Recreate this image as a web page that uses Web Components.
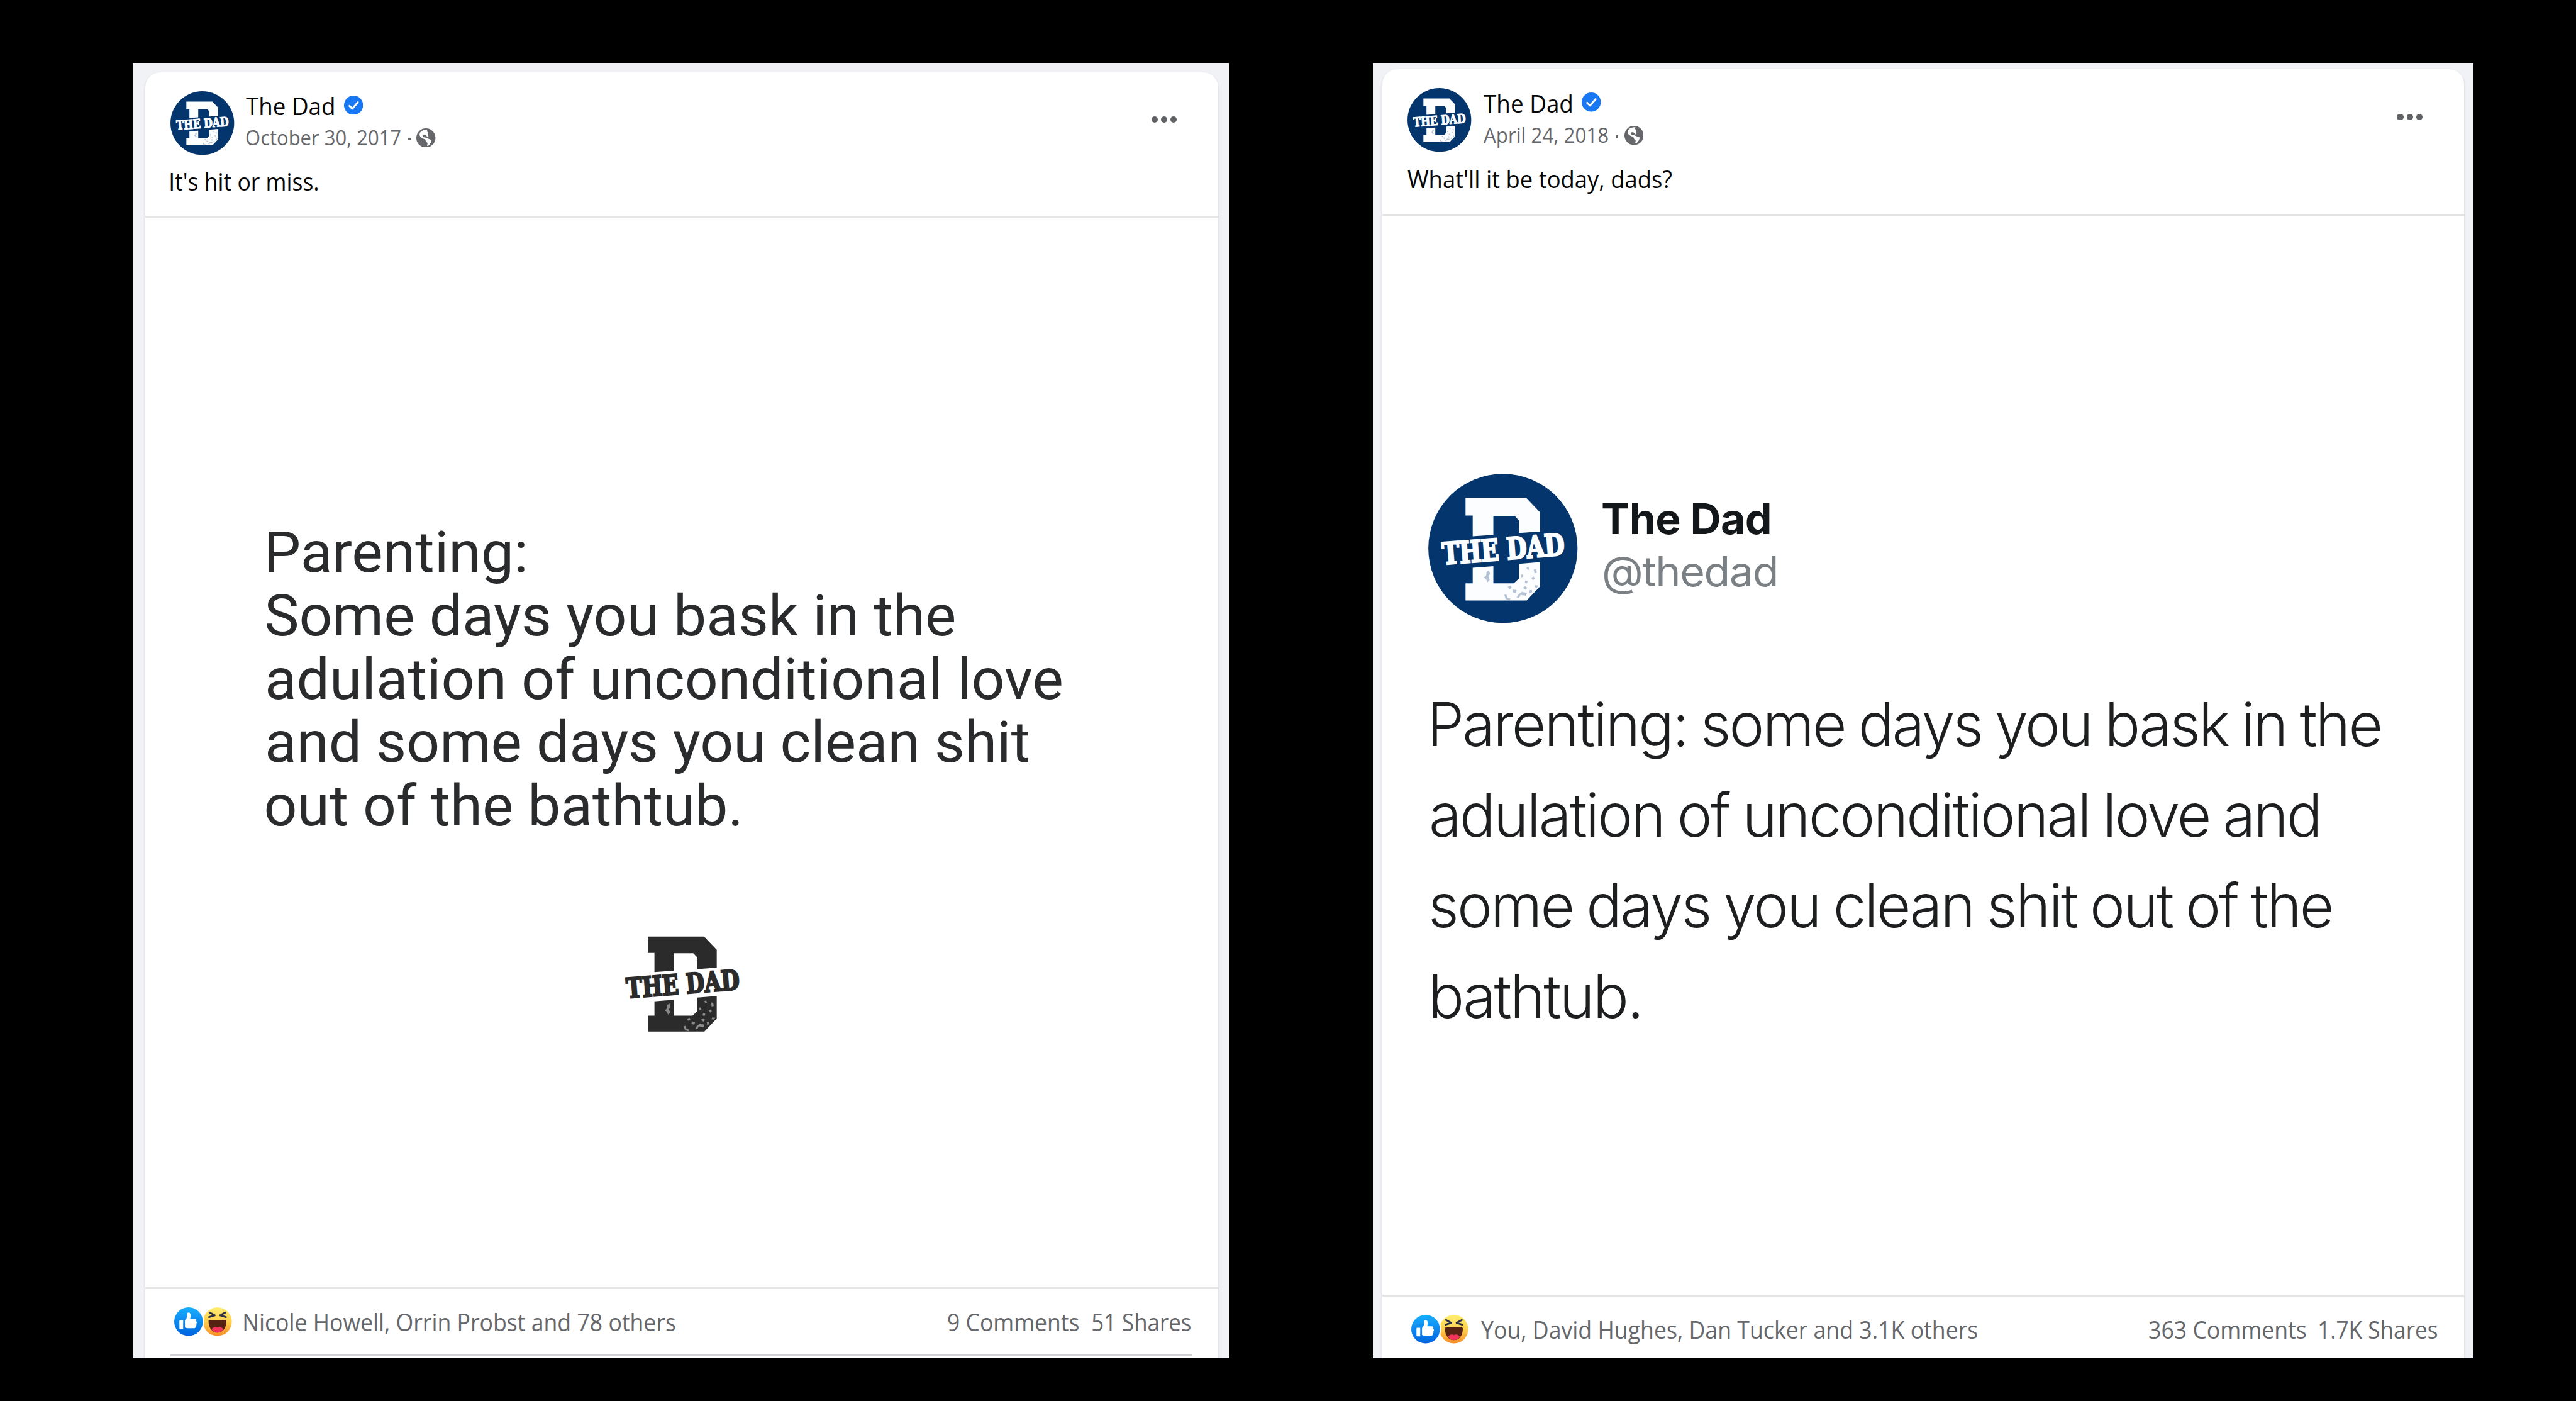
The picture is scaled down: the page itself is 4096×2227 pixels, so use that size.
<!DOCTYPE html>
<html lang="en">
<head>
<meta charset="utf-8">
<title>The Dad</title>
<style>
  html, body {
    margin: 0;
    background: #000;
  }
  body {
    width: 4096px;
    height: 2227px;
    overflow: hidden;
    font-family: "Open Sans", "Noto Sans", sans-serif;
    color: #050505;
  }
  main {
    display: flex;
    justify-content: space-between;
    padding: 100px 163px 0 211px;
  }
  .left {
    width: 1743px;
    --pad: 14.5px 17.3px 0 20px;
    --head: 228.7px;
    --media: 1702.9px;
    --top: 28.1px;
    --gap: 18px;
    --foot: 28.2px;
    --dots: 65.5px;
  }
  .right {
    width: 1750px;
    --pad: 9.9px 14.6px 0 14.7px;
    --head: 230.5px;
    --media: 1717.6px;
    --top: 28.5px;
    --gap: 19.8px;
    --foot: 28.6px;
    --dots: 66.3px;
  }
  .roboto {
    padding: 482px 0 0 194px;
    font: 400 91.7px/100.65px Roboto, sans-serif;
    color: #2a2b2d;
  }
  .roboto dad-logo {
    width: 235.4px;
    height: 191.3px;
    margin: 139.1px 0 0 545px;
    color: #2b2b2b;
  }
  .tweet {
    padding: 409.4px 0 0 73.3px;
    font-family: Inter, sans-serif;
    color: #1c1e20;
  }
  .author {
    display: flex;
    gap: 39.2px;
  }
  .author dad-logo {
    width: 237.5px;
    height: 237.5px;
  }
  .author div {
    padding-top: 31.6px;
    line-height: 82.2px;
  }
  .author .who {
    font-size: 67.5px;
    font-weight: 650;
    letter-spacing: -.01em;
    color: #14171a;
  }
  .author .handle {
    font-size: 66px;
    letter-spacing: -.02em;
    color: #7b8085;
  }
  .tweet .body {
    margin: 89px 0 0 5px;
    font-size: 95.6px;
    font-weight: 340;
    line-height: 144.05px;
    letter-spacing: -.03em;
    word-spacing: -.03em;
  }
</style>
</head>
<body>
<main>
  <post-card class="left" name="The Dad" name-width="139.6" date="October 30, 2017" date-width="245.8"
    reactions="Nicole Howell, Orrin Probst and 78 others" reactions-width="686.1"
    comments="9 Comments" comments-width="208.6" shares="51 Shares" shares-width="156.6" divider>
    <fit-line slot="message" width="234.9">It's hit or miss.</fit-line>
    <div class="roboto">
      <fit-line indent="1.6" width="407.9">Parenting:</fit-line>
      <fit-line indent="-1.7" width="1094.4">Some days you bask in the</fit-line>
      <fit-line width="1263.1">adulation of unconditional love</fit-line>
      <fit-line width="1210">and some days you clean shit</fit-line>
      <fit-line indent="-1.5" width="751.2">out of the bathtub.</fit-line>
      <dad-logo></dad-logo>
    </div>
  </post-card>
  <post-card class="right" name="The Dad" name-width="140" date="April 24, 2018" date-width="197.8"
    reactions="You, David Hughes, Dan Tucker and 3.1K others" reactions-width="789.5"
    comments="363 Comments" comments-width="249.9" shares="1.7K Shares" shares-width="187.7">
    <fit-line slot="message" width="420.8">What'll it be today, dads?</fit-line>
    <div class="tweet">
      <div class="author">
        <dad-logo round></dad-logo>
        <div>
          <fit-line class="who" width="266">The Dad</fit-line>
          <fit-line class="handle" indent="2" width="274">@thedad</fit-line>
        </div>
      </div>
      <div class="body">
        <fit-line indent="1.9" width="1506.8">Parenting: some days you bask in the</fit-line>
        <fit-line width="1409.3">adulation of unconditional love and</fit-line>
        <fit-line width="1431.2">some days you clean shit out of the</fit-line>
        <fit-line indent="1.9" width="328.2">bathtub.</fit-line>
      </div>
    </div>
  </post-card>
</main>

<script>
// One line of text, stretched so that its ink is exactly `width` wide
class FitLine extends HTMLElement {
  constructor() {
    super();
    this.attachShadow({ mode: 'open' });
    this.shadowRoot.innerHTML = `
      <style>
        :host { display: block; white-space: nowrap; }
        span { display: inline-block; transform-origin: 0 0; }
      </style>
      <span><slot></slot></span>
    `;
  }

  connectedCallback() {
    const width = Number(this.getAttribute('width'));
    const indent = Number(this.getAttribute('indent') || 0);
    const style = getComputedStyle(this);
    const spacing = parseFloat(style.letterSpacing) || 0;
    const wordSpacing = parseFloat(style.wordSpacing) || 0;
    const text = this.textContent;
    const ctx = document.createElement('canvas').getContext('2d');
    ctx.font = `${style.fontWeight} ${style.fontSize} ${style.fontFamily}`;
    const m = ctx.measureText(text);
    const ink = m.actualBoundingBoxLeft + m.actualBoundingBoxRight
      + spacing * (text.length - 1) + wordSpacing * (text.split(' ').length - 1);
    const scale = width / ink;
    const shift = m.actualBoundingBoxLeft * scale;
    this.style.width = `${width}px`;
    this.shadowRoot.querySelector('span').style.transform =
      `translateX(${shift + indent}px) scaleX(${scale})`;
  }
}

// The varsity D with the name across it, alone or on a round navy badge
class DadLogo extends HTMLElement {
  constructor() {
    super();
    this.attachShadow({ mode: 'open' });
  }

  connectedCallback() {
    const round = this.hasAttribute('round');
    this.shadowRoot.innerHTML = `
      <style>
        :host { display: block; flex: none; }
        svg { display: block; width: 100%; height: 100%; overflow: visible; }
        text { font: 700 condensed 180px "DejaVu Serif Condensed", "DejaVu Serif", serif; }
      </style>
      <svg viewBox="${round ? '21 -73 897 897' : '0 0 960 780'}">
        ${round ? '<circle cx="469.5" cy="375.5" r="448" fill="#04366d"/>' : ''}
        <g fill="${round ? '#fbfdff' : 'currentColor'}">
          <path d="M245 72H610L692 158V274L566 283V208L540 180H412V294L288 303V178H245Z"/>
          <path d="M288 492L412 482V585H535L566 556V468L692 458V604L612 688H245V585H288Z"/>
          <g transform="rotate(-4.5 112 474)" stroke="${round ? '#fbfdff' : 'currentColor'}" stroke-width="10">
            <text x="110" y="472" textLength="736" lengthAdjust="spacingAndGlyphs">THE DAD</text>
          </g>
        </g>
        <g fill="${round ? '#5f7ca0' : '#fff'}" opacity=".45">
          <path d="M372 515l14-8 6 22-10 14 8 22-14 14-8-20-14-8 14-12z"/>
          <path d="M610 492l12-6 8 12-10 8zM655 500l14 2 4 20-14 4zM575 535l12-4 6 14-12 4zM640 552l14-8 6 12-10 10zM604 568l14 4-4 14-14-2zM662 596l20 2-8 14-16-4z"/>
          <path d="M498 606l18-8 6 14-12 8zM530 622l22 4-6 18-18-6zM562 652l22-16 30 8-8 16-30-6-10 20-14-4zM478 654l12-4 6 22 18 4-4 10-24-6zM590 612l14-10 12 10-10 12zM628 628l14-4 4 14-16 8z"/>
        </g>
      </svg>
    `;
  }
}

class VerifiedBadge extends HTMLElement {
  constructor() {
    super();
    this.attachShadow({ mode: 'open' });
    this.shadowRoot.innerHTML = `
      <style>
        :host { display: block; width: 30.4px; height: 30.4px; }
        svg { display: block; }
      </style>
      <svg width="100%" height="100%" viewBox="0 0 12 12">
        <circle cx="6" cy="6" r="6" fill="#1877f2"/>
        <path d="M3.4 6.5L5.2 8.2L8.7 4.2" fill="none" stroke="#fff" stroke-width="1.2" stroke-linecap="round" stroke-linejoin="round"/>
      </svg>
    `;
  }
}

class GlobeIcon extends HTMLElement {
  constructor() {
    super();
    this.attachShadow({ mode: 'open' });
    this.shadowRoot.innerHTML = `
      <style>
        :host { display: block; width: 30.4px; height: 30.4px; }
        svg { display: block; }
      </style>
      <svg width="100%" height="100%" viewBox="0 0 16 16">
        <circle cx="8" cy="8" r="8" fill="#65676b"/>
        <path fill="#fff" d="M3 3.6C4.8 1.6 6.8 1 9.2 1.2L8.8 2.6L10 3.4L9.6 5L10.2 6.6L9 7.2L8.2 5.8L6.4 5.2L5 6.2L6 7.4L8 7.8L10.6 9L12.8 9.8L12.2 12L10.4 14.4L9 14.8L9.4 12.4L8 10.8L7.4 9.2L5.4 8.6L3.6 7.4L2.6 5.6Z"/>
      </svg>
    `;
  }
}

class ReactionIcons extends HTMLElement {
  constructor() {
    super();
    this.attachShadow({ mode: 'open' });
    this.shadowRoot.innerHTML = `
      <style>
        :host { display: flex; margin-top: -1.6px; }
        svg { display: block; width: 45.6px; height: 45.6px; overflow: visible; }
        .like { position: relative; }
      </style>
      <svg class="like" viewBox="0 0 16 16">
        <linearGradient id="b" x1="0" y1="0" x2="0" y2="1"><stop stop-color="#18afff"/><stop offset="1" stop-color="#0062df"/></linearGradient>
        <circle cx="8" cy="8" r="8.7" fill="#fff"/>
        <circle cx="8" cy="8" r="8" fill="url(#b)"/>
        <path fill="#fff" d="M3.3 7.2H5V12H3.3A.4.4 0 0 1 2.9 11.6V7.6A.4.4 0 0 1 3.3 7.2ZM6 7.3C6.9 6.5 7.2 5.6 7.2 4.2C7.2 3.2 7.5 2.9 8.1 2.9C9 3 9.3 4 9.2 4.9L8.9 6.4H11.5C12.3 6.4 12.6 7.1 12.2 7.7C12.8 8.2 12.8 8.8 12.3 9.1C12.6 9.7 12.4 10.2 11.9 10.5C12.1 11.3 11.7 11.7 10.9 11.7H8C7.2 11.7 6.6 11.5 6 11.2Z"/>
      </svg>
      <svg viewBox="0 0 16 16">
        <linearGradient id="y" x1="0" y1="0" x2="0" y2="1"><stop stop-color="#ffee72"/><stop offset=".5" stop-color="#ffd04e"/><stop offset="1" stop-color="#f78c26"/></linearGradient>
        <circle cx="8" cy="8" r="8" fill="url(#y)"/>
        <path d="M3.6 2.9L6.5 4.5L3.3 5.5M12.4 2.9L9.5 4.5L12.7 5.5" fill="none" stroke="#2b3048" stroke-width="1" stroke-linecap="round" stroke-linejoin="round"/>
        <path d="M3 7.6C3 7.2 3.3 7 3.8 7H12.2C12.7 7 13 7.2 13 7.6C13 11.4 11 14.1 8 14.1S3 11.4 3 7.6Z" fill="#562313"/>
        <path d="M4.7 12.3C5.4 10.9 7 10.6 8 11.3C9 10.6 10.6 10.9 11.3 12.3C10.5 13.5 9.4 14.1 8 14.1S5.5 13.5 4.7 12.3Z" fill="#f0345b"/>
      </svg>
    `;
  }
}

class PostCard extends HTMLElement {
  constructor() {
    super();
    this.attachShadow({ mode: 'open' });
  }

  line(name) {
    return `<fit-line class="${name}" width="${this.getAttribute(name + '-width')}">${this.getAttribute(name)}</fit-line>`;
  }

  connectedCallback() {
    this.shadowRoot.innerHTML = `
      <style>
        :host {
          display: flex;
          box-sizing: border-box;
          height: 2059px;
          padding: var(--pad);
          overflow: hidden;
          background: #f0f2f5;
        }
        article {
          flex: 1;
          background: #fff;
          border-radius: 24px 24px 0 0;
          box-shadow: 0 2.5px 4px rgba(0, 0, 0, .13);
        }
        header {
          box-sizing: border-box;
          height: var(--head);
          padding: var(--top) var(--dots) 0 40.4px;
          line-height: 50px;
          font-size: 37.5px;
        }
        .who {
          display: flex;
          height: 105px;
          margin-bottom: 16.5px;
        }
        .id { padding-top: 1.2px; }
        dad-logo {
          width: 101.4px;
          height: 101.4px;
          margin: 2px var(--gap) 0 0;
        }
        .row {
          display: flex;
          align-items: center;
        }
        .name { font-weight: 520; }
        verified-badge { margin: -4px 0 0 16.2px; }
        .meta {
          margin-top: 5.4px;
          height: 40px;
          line-height: 40px;
          font-size: 32px;
          color: #65676b;
        }
        .meta i {
          width: 4px;
          height: 4px;
          margin: 4px 9.6px 0 12px;
          border-radius: 1px;
          background: #65676b;
        }
        .more {
          display: flex;
          gap: 4.9px;
          margin: 42.5px 0 0 auto;
        }
        .more i {
          width: 10.3px;
          height: 10.3px;
          border-radius: 50%;
          background: #606266;
        }
        .media {
          box-sizing: border-box;
          height: var(--media);
          border-top: 3px solid #e5e5e6;
        }
        .media + footer { border-top: 3px solid #e5e5e6; }
        footer {
          padding: calc(var(--foot) - .5px) 42.8px 0 46px;
          font-size: 37.5px;
          line-height: 50px;
          color: #65676b;
        }
        .reactions { margin-left: 20px; }
        .comments { margin-left: auto; }
        .shares { margin-left: 21.4px; }
        hr {
          height: 3px;
          margin: 26.4px -2.1px 0 -5.8px;
          border: 0;
          background: #ced0d3;
        }
      </style>
      <article>
        <header>
          <div class="who">
            <dad-logo round></dad-logo>
            <div class="id">
              <div class="row">${this.line('name')}<verified-badge></verified-badge></div>
              <div class="row meta">${this.line('date')}<i></i><globe-icon></globe-icon></div>
            </div>
            <div class="more"><i></i><i></i><i></i></div>
          </div>
          <slot name="message"></slot>
        </header>
        <div class="media"><slot></slot></div>
        <footer>
          <div class="row">
            <reaction-icons></reaction-icons>
            ${this.line('reactions')}
            ${this.line('comments')}
            ${this.line('shares')}
          </div>
          ${this.hasAttribute('divider') ? '<hr>' : ''}
        </footer>
      </article>
    `;
  }
}

customElements.define('dad-logo', DadLogo);
customElements.define('verified-badge', VerifiedBadge);
customElements.define('globe-icon', GlobeIcon);
customElements.define('reaction-icons', ReactionIcons);
customElements.define('post-card', PostCard);
// last, so that slotted lines are measured in the font their card gives them
customElements.define('fit-line', FitLine);
</script>
</body>
</html>
